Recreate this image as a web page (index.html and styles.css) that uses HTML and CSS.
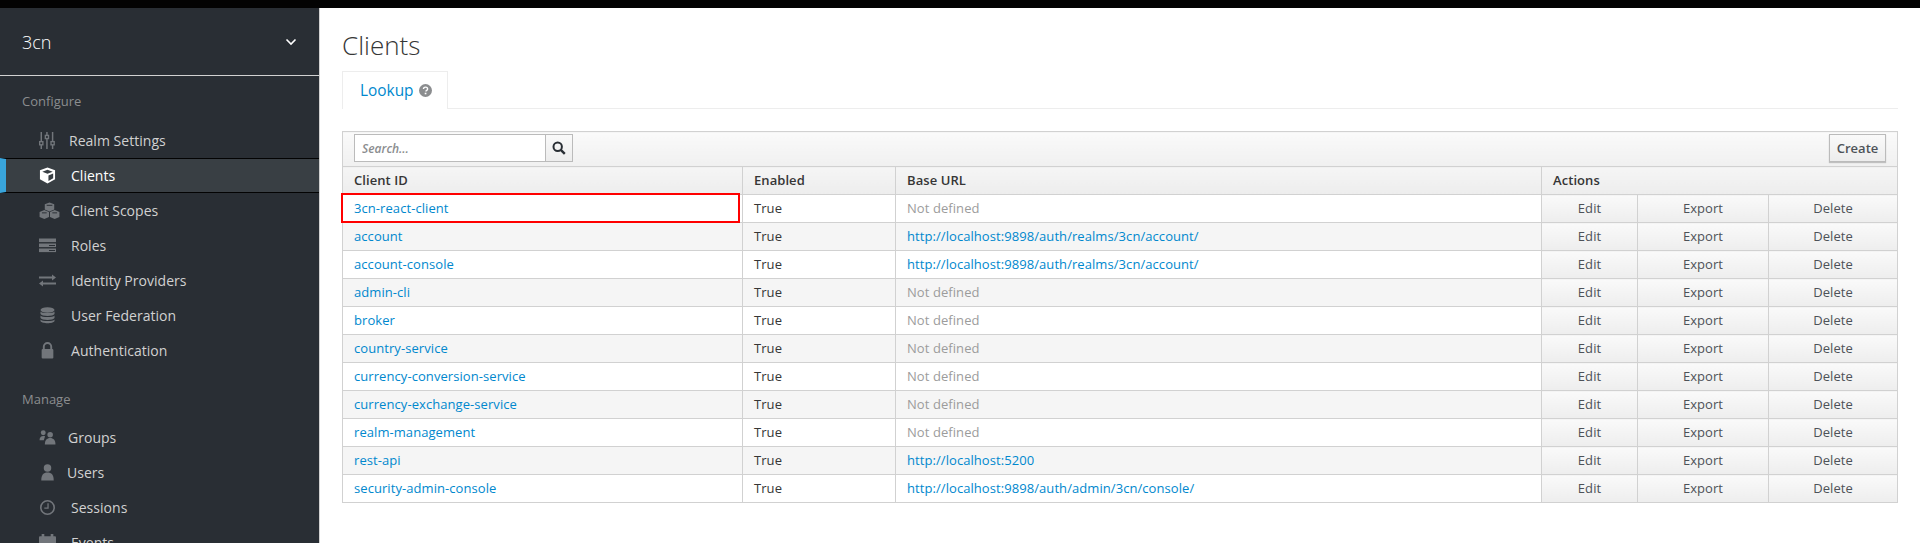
FILE: index.html
```html
<!DOCTYPE html>
<html lang="en">
<head>
    <meta charset="UTF-8">
    <title>Clients</title>
    <link rel="stylesheet" href="styles.css">
</head>
<body>
    <div class="topbar"></div>
    <div class="layout">
        <!-- Sidebar -->
        <nav class="sidebar">
            <div class="realm">
                <span>3cn</span>
                <svg class="caret" width="12" height="8" viewBox="0 0 12 8"><path d="M1.500 1.500 6 6l4.500-4.500" fill="none" stroke="#fff" stroke-width="1.600"/></svg>
            </div>
            <h3 class="nav-title">Configure</h3>
            <ul class="nav-list">
                <li class="nav-item gap-13">
                    <svg class="nav-icon" viewBox="0 0 15 15" preserveAspectRatio="xMinYMid"><path d="M2 0v15M7 0v15M12 0v15" fill="none" stroke="#72767b" stroke-width="1.300"/><g fill="none" stroke="#72767b" stroke-width="1.200"><rect x=".6" y="8.500" width="2.800" height="2.800" fill="#292e34"/><rect x="5.600" y="3" width="2.800" height="2.800" fill="#292e34"/><rect x="10.600" y="8.500" width="2.800" height="2.800" fill="#292e34"/></g></svg>
                    Realm Settings
                </li>
                <li class="nav-item active">
                    <svg class="nav-icon" viewBox="0 0 18 18"><path d="M9 .5 17 3.500V13L9 17.500 1 13V3.500Z" fill="#fff"/><path d="M3.500 5 9 7.200 14.500 5 9 3ZM10 9v5.800l5-2.800V6.900Z" fill="#393f44"/></svg>
                    Clients
                </li>
                <li class="nav-item">
                    <svg class="nav-icon wide" viewBox="0 0 22 18"><g fill="#72767b"><path d="M11 .5 16 2.500V8L11 10 6 8V2.500Z"/><path d="M5.500 8.500 10.500 10.500V16L5.500 18 .5 16V10.500Z"/><path d="M16.500 8.500 21.500 10.500V16L16.500 18 11.500 16V10.500Z"/></g><g fill="#292e34"><rect x="8" y="3" width="6" height="1"/><rect x="3" y="11" width="5" height="1"/><rect x="14" y="11" width="5" height="1"/></g></svg>
                    Client Scopes
                </li>
                <li class="nav-item">
                    <svg class="nav-icon" viewBox="0 0 17 14"><g fill="#72767b"><rect y="0" width="17" height="3.600"/><rect y="5" width="17" height="3.600"/><rect y="10" width="17" height="3.600"/></g><g fill="#292e34"><rect x="10" y="6.500" width="6" height="1"/><rect x="10" y="11.500" width="6" height="1"/></g></svg>
                    Roles
                </li>
                <li class="nav-item">
                    <svg class="nav-icon" viewBox="0 0 17 12"><path d="M0 2h13V0l4 3-4 3V4H0ZM17 8H4V6l-4 3 4 3v-2h13Z" fill="#72767b"/></svg>
                    Identity Providers
                </li>
                <li class="nav-item">
                    <svg class="nav-icon" viewBox="0 0 16 17"><g fill="#72767b"><ellipse cx="8" cy="3" rx="7" ry="2.800"/><path d="M1 4.500C2 6.500 14 6.500 15 4.500V7C14 9.500 2 9.500 1 7Z"/><path d="M1 8.500C2 10.500 14 10.500 15 8.500V11C14 13.500 2 13.500 1 11Z"/><path d="M1 12.500C2 14.500 14 14.500 15 12.500V14C14 17 2 17 1 14Z"/></g></svg>
                    User Federation
                </li>
                <li class="nav-item">
                    <svg class="nav-icon" viewBox="0 0 14 16"><path d="M3.500 7V4.500a3.500 3.500 0 0 1 7 0V7" fill="none" stroke="#72767b" stroke-width="1.800"/><rect x="1.500" y="6.500" width="11" height="9" rx="1" fill="#72767b"/></svg>
                    Authentication
                </li>
            </ul>
            <h3 class="nav-title manage">Manage</h3>
            <ul class="nav-list">
                <li class="nav-item gap-12">
                    <svg class="nav-icon" viewBox="0 0 16 15"><g fill="#72767b"><circle cx="4" cy="3" r="2.300"/><path d="M.5 10c0-3 1.500-4 3.500-4 .7 0 1.200.1 1.700.4L4.500 10Z"/><circle cx="10.500" cy="5" r="2.600"/><path d="M5.500 14c0-4 2-6 5-6s5 2 5 6Z"/></g></svg>
                    Groups
                </li>
                <li class="nav-item gap-11">
                    <svg class="nav-icon" viewBox="0 0 14 15"><g fill="#72767b"><circle cx="7" cy="3.500" r="3.300"/><path d="M1.500 14.500c0-5 2-7 5.500-7s5.500 2 5.500 7Z"/></g></svg>
                    Users
                </li>
                <li class="nav-item">
                    <svg class="nav-icon" viewBox="0 0 16 16"><circle cx="8" cy="8" r="6.300" fill="none" stroke="#72767b" stroke-width="1.500"/><path d="M8.500 4v4.500H5" fill="none" stroke="#72767b" stroke-width="1.200"/></svg>
                    Sessions
                </li>
                <li class="nav-item">
                    <svg class="nav-icon" viewBox="0 0 16 16"><g fill="#72767b"><rect x="0" y="2" width="16" height="14" rx="1"/><rect x="2.500" y="0" width="2.500" height="4"/><rect x="11" y="0" width="2.500" height="4"/></g></svg>
                    Events
                </li>
            </ul>
        </nav>

        <!-- Main content -->
        <main class="content">
            <h1>Clients</h1>
            <div class="tabs">
                <div class="tab">
                    Lookup
                    <svg class="help" width="13" height="13" viewBox="0 0 13 13"><circle cx="6.500" cy="6.500" r="6.500" fill="#8b8d8f"/><path d="M4.500 5.100c0-1.300.9-2 2.100-2s2 .7 2 1.800c0 1.500-1.700 1.400-1.700 2.700" fill="none" stroke="#fff" stroke-width="1.400"/><rect x="5.700" y="8.700" width="1.700" height="1.600" fill="#fff"/></svg>
                </div>
            </div>

            <table class="clients">
                <colgroup>
                    <col class="col-id"><col class="col-enabled"><col class="col-url">
                    <col class="col-edit"><col class="col-export"><col class="col-delete">
                </colgroup>
                <thead>
                    <tr>
                        <th colspan="6" class="toolbar-cell">
                            <div class="toolbar">
                                <div class="search">
                                    <input type="text" placeholder="Search...">
                                    <button class="search-btn">
                                        <svg width="14" height="14" viewBox="0 0 14 14"><circle cx="5.700" cy="5.700" r="4.200" fill="none" stroke="#292e34" stroke-width="2"/><path d="m8.800 8.800 4 4" stroke="#292e34" stroke-width="2.400"/></svg>
                                    </button>
                                </div>
                                <button class="create">Create</button>
                            </div>
                        </th>
                    </tr>
                    <tr class="head-row">
                        <th>Client ID</th>
                        <th>Enabled</th>
                        <th>Base URL</th>
                        <th colspan="3">Actions</th>
                    </tr>
                </thead>
                <tbody id="rows"></tbody>
            </table>
        </main>
    </div>

    <script>
        const clients = [
            ['3cn-react-client', ''],
            ['account', 'http://localhost:9898/auth/realms/3cn/account/'],
            ['account-console', 'http://localhost:9898/auth/realms/3cn/account/'],
            ['admin-cli', ''],
            ['broker', ''],
            ['country-service', ''],
            ['currency-conversion-service', ''],
            ['currency-exchange-service', ''],
            ['realm-management', ''],
            ['rest-api', 'http://localhost:5200'],
            ['security-admin-console', 'http://localhost:9898/auth/admin/3cn/console/']
        ];

        const tableBody = document.getElementById('rows');
        clients.forEach((client, i) => {
            const row = document.createElement('tr');
            const url = client[1]
                ? `<a href="#">${client[1]}</a>`
                : '<span class="muted">Not defined</span>';
            row.innerHTML = `
                <td class="${i === 0 ? 'picked' : ''}"><a href="#">${client[0]}</a></td>
                <td>True</td>
                <td>${url}</td>
                <td class="action">Edit</td>
                <td class="action">Export</td>
                <td class="action">Delete</td>
            `;
            tableBody.appendChild(row);
        });
    </script>
</body>
</html>
```

FILE: styles.css
```css
* {
    box-sizing: border-box;
}
html, body {
    height: 100%;
}
body {
    margin: 0;
    overflow: hidden;
    font-family: "Open Sans", sans-serif;
    font-size: 13px;
    color: #363636;
    background: #fff;
}
.topbar {
    height: 8px;
    background: #030303;
}
.layout {
    display: flex;
    height: 535px;
}

/* sidebar */
.sidebar {
    width: 320px;
    flex: none;
    overflow: hidden;
    background: #292e34;
    border-right: 1px solid #d1d1d1;
    color: #f5f5f5;
}
.realm {
    height: 68px;
    padding: 0 22px 0 22px;
    display: flex;
    align-items: center;
    justify-content: space-between;
    border-bottom: 1px solid #d1d1d1;
    font-size: 18px;
    font-weight: 300;
    color: #fff;
}
.nav-title {
    margin: 0;
    padding: 16px 0 0 22px;
    height: 47px;
    font-size: 13px;
    font-weight: 400;
    color: #8b8d8f;
}
.nav-title.manage {
    padding-top: 22px;
    height: 52px;
}
.nav-list {
    list-style: none;
    margin: 0;
    padding: 0;
}
.nav-item {
    height: 35px;
    padding-left: 39px;
    display: flex;
    align-items: center;
    gap: 15px;
    font-size: 14px;
    letter-spacing: .03px;
    color: #d1d1d1;
}
.nav-item.gap-13 {
    gap: 13px;
}
.nav-item.gap-12 {
    gap: 12px;
}
.nav-item.gap-11 {
    gap: 11px;
}
.nav-item.active {
    background: #393f44;
    color: #fff;
    border-top: 1px solid #030303;
    border-bottom: 1px solid #030303;
    border-left: 6px solid #39a5dc;
    padding-left: 33px;
}
.nav-icon {
    width: 17px;
    height: 17px;
    flex: none;
}
.nav-icon.wide {
    width: 21px;
    margin-right: -4px;
}

/* main */
.content {
    flex: 1;
    padding: 0 22px;
}
h1 {
    margin: 0;
    padding-top: 21px;
    height: 63px;
    font-size: 26px;
    line-height: 32px;
    font-weight: 300;
    color: #363636;
}
.tabs {
    height: 38px;
    border-bottom: 1px solid #ededed;
    display: flex;
}
.tab {
    width: 106px;
    height: 38px;
    padding-left: 17px;
    display: flex;
    align-items: center;
    gap: 5px;
    border: 1px solid #ededed;
    border-bottom: none;
    background: #fff;
    font-size: 15.4px;
    color: #0088ce;
}

/* table */
.clients {
    width: 100%;
    margin-top: 22px;
    table-layout: fixed;
    border-collapse: collapse;
    border: 1px solid #d1d1d1;
}
.col-id { width: 400px; }
.col-enabled { width: 153px; }
.col-url { width: 646px; }
.col-edit { width: 96px; }
.col-export { width: 131px; }
.col-delete { width: 129px; }

.clients th, .clients td {
    border: 1px solid #d1d1d1;
    padding: 0 11px 2px;
    height: 28px;
    text-align: left;
    font-size: 13px;
    letter-spacing: .07px;
}
.clients th {
    font-weight: 600;
    color: #363636;
    background: linear-gradient(#f5f5f5, #ededed);
}
.clients th.toolbar-cell {
    height: 35px;
    padding: 2px 11px 0;
    background: linear-gradient(#fafafa, #f0f0f0);
    vertical-align: top;
}
.clients tbody tr:nth-child(even) td {
    background: #f5f5f5;
}
.clients a {
    color: #0088ce;
    text-decoration: none;
}
.clients .muted {
    color: #9c9c9c;
}
.clients td.action {
    text-align: center;
    background: linear-gradient(#fafafa, #ededed);
    color: #4d5258;
}
.clients tbody tr:nth-child(even) td.action {
    background: linear-gradient(#fafafa, #ededed);
}
.clients td.picked {
    position: relative;
}
.clients td.picked::after {
    content: "";
    position: absolute;
    left: -2px;
    right: 2px;
    top: -2px;
    bottom: -1px;
    border: 2px solid #f00;
}

.toolbar {
    display: flex;
    justify-content: space-between;
    align-items: flex-start;
}
.search {
    display: flex;
}
.search input {
    width: 192px;
    height: 28px;
    padding: 0 7px;
    border: 1px solid #bbb;
    font-family: inherit;
    font-size: 12px;
    font-style: italic;
    font-weight: 600;
    outline: none;
    background: #fff;
}
.search input::placeholder {
    color: #8b8d8f;
}
.search-btn {
    width: 27px;
    height: 28px;
    padding: 0;
    border: 1px solid #bbb;
    border-left: none;
    background: linear-gradient(#fafafa, #ededed);
    display: flex;
    align-items: center;
    justify-content: center;
}
.create {
    height: 28px;
    width: 57px;
    padding: 0;
    border: 1px solid #bbb;
    box-shadow: 0 1px 1px rgba(0, 0, 0, .2);
    background: linear-gradient(#fafafa, #ededed);
    font-family: inherit;
    font-size: 13px;
    font-weight: 600;
    color: #4d5258;
}
```
